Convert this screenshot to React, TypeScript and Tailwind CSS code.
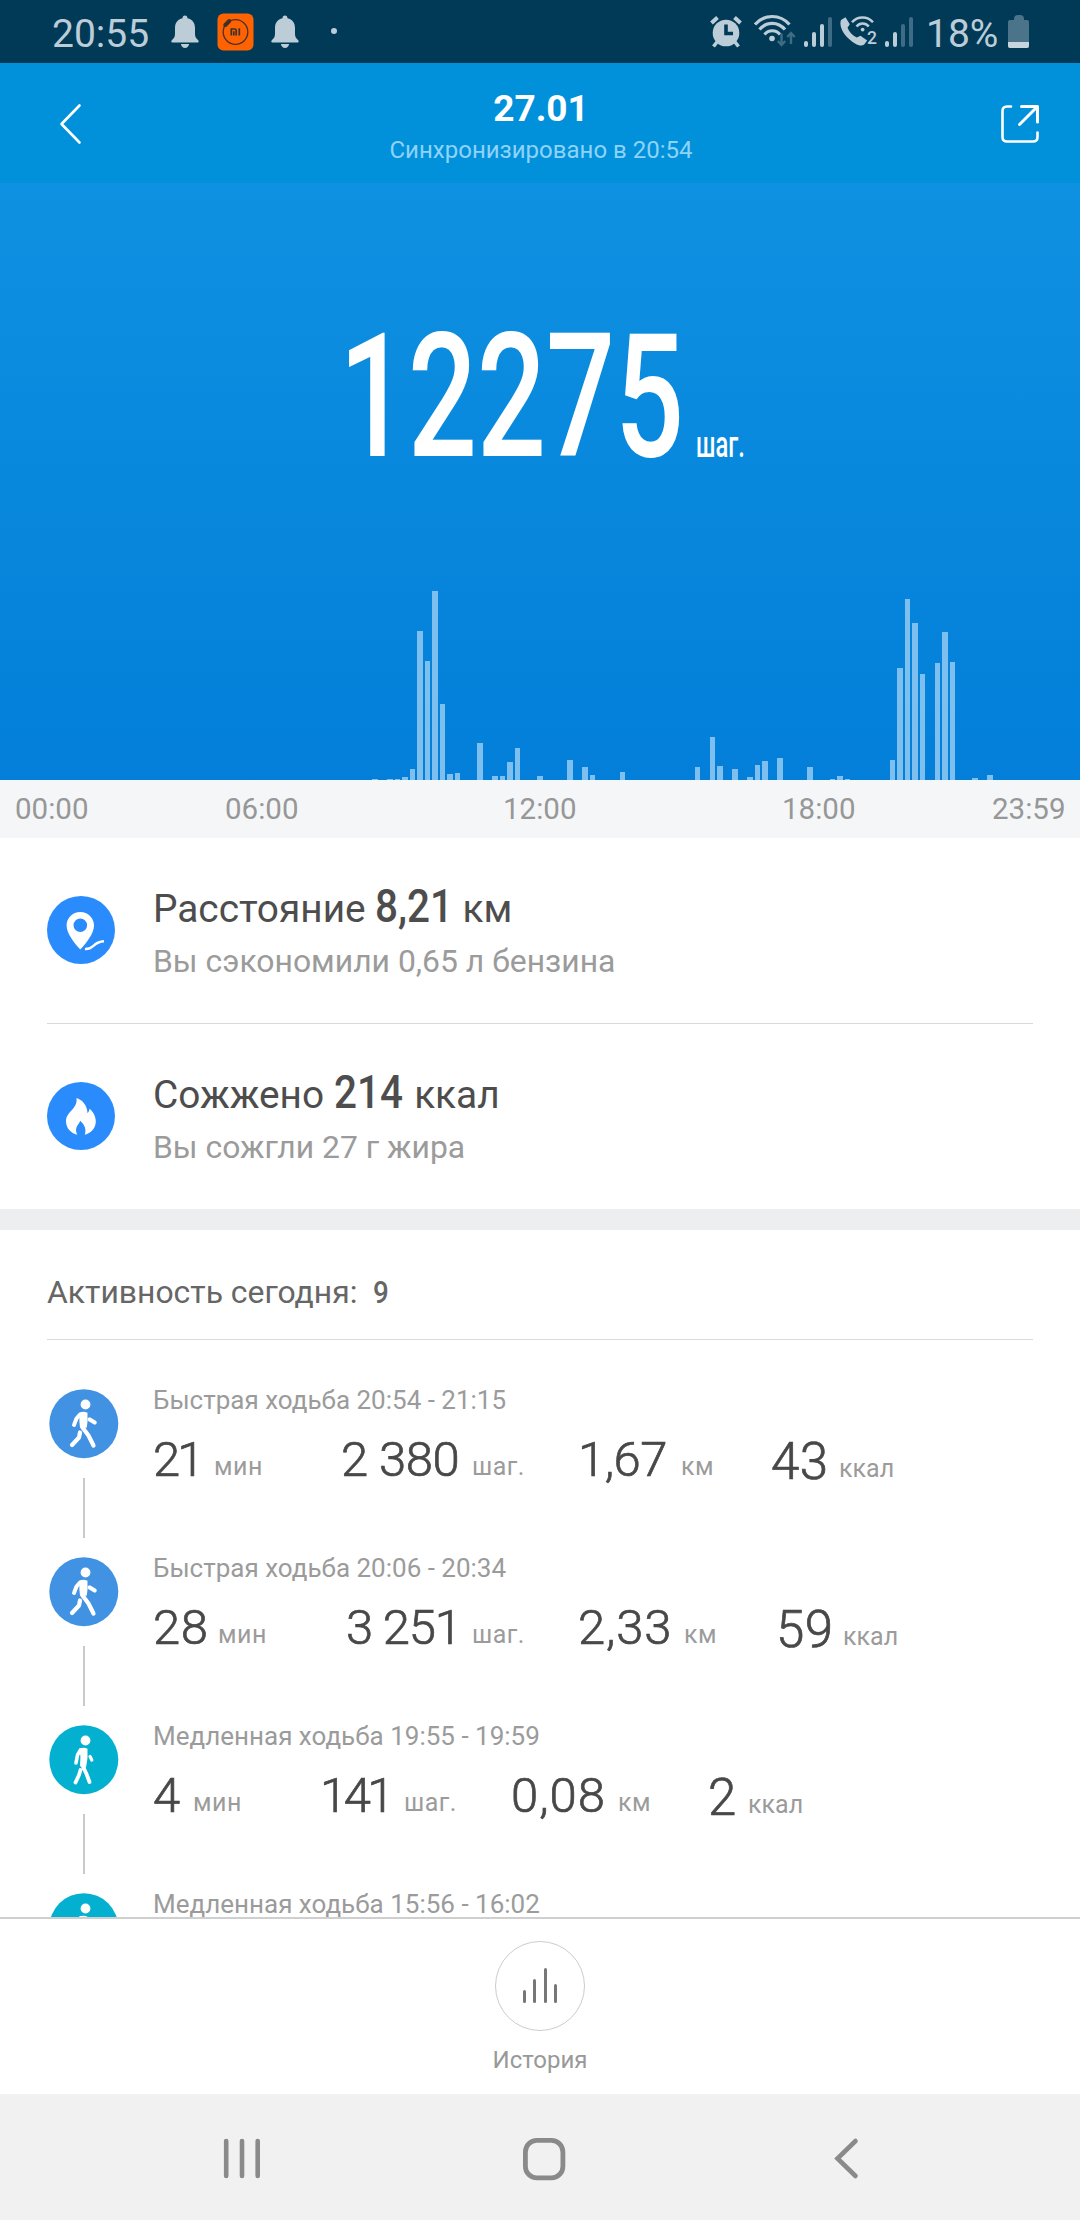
import React from "react";

const BAR_HEIGHTS: Record<number, number> = {
  49: 1, 51: 1, 52: 1.5, 53: 3, 54: 11, 55: 149, 56: 119.5, 57: 189, 58: 76, 59: 6, 60: 7,
  63: 37, 65: 4, 66: 4, 67: 18, 68: 32, 71: 4, 75: 20, 77: 13, 78: 5, 82: 8, 92: 13, 94: 43,
  95: 14, 97: 11, 99: 3, 100: 15, 101: 19, 103: 22, 107: 13, 110: 1, 111: 4, 112: 1,
  118: 20, 119: 112, 120: 181, 121: 157, 122: 106, 124: 117, 125: 148, 126: 118, 129: 2, 131: 5,
};

function Bell() {
  return (
    <svg width="28" height="33" viewBox="0 0 28 33" fill="#bccdd8">
      <path d="M14 .5c1.700 0 2.500 1.200 2.500 2.700C21.500 4.400 24 8 24 13v6c0 3 1.200 4.300 3 6 1.200 1.200.8 2.500-.8 2.500H1.800C.2 27.500-.2 26.200 1 25c1.800-1.700 3-3 3-6v-6C4 8 6.500 4.400 11.500 3.200 11.500 1.700 12.300.5 14 .5z" />
      <path d="M10 29h8c0 2.300-1.800 4-4 4s-4-1.700-4-4z" />
    </svg>
  );
}

function MiBadge() {
  return (
    <svg width="37" height="38" viewBox="0 0 37 38" fill="none">
      <rect x=".5" y=".5" width="36" height="37" rx="6" fill="#ff6200" />
      <circle cx="18.500" cy="19" r="12.300" stroke="#4a3128" strokeWidth="1.300" />
      <path d="M7 13l5-5.500" stroke="#ff6200" strokeWidth="7" />
      <path d="M8.300 12l4-4" stroke="#3f3029" strokeWidth="4" strokeLinecap="round" />
      <path d="M14.300 22.500V16h3.200c1.200 0 1.700.6 1.700 1.700v4.800M16.800 18.200v4.300M22.300 15.200v7.300" stroke="#3f3029" strokeWidth="1.700" />
    </svg>
  );
}

function Signal({ on }: { on: number }) {
  const bars = [6, 15, 23, 30];
  return (
    <span className="flex h-[30px] w-[28px] items-end justify-between">
      {bars.map((h, i) => (
        <span
          key={h}
          className={i < on ? "w-[3.500px] rounded-full bg-[#bccdd8]" : "w-[3.500px] rounded-full bg-[#3f6c85]"}
          style={{ height: h }}
        />
      ))}
    </span>
  );
}

function StatusBar() {
  return (
    <div className="flex h-[63px] items-start bg-[#003a57] text-[#bccdd8]">
      <span className="ml-[52px] mt-[11px] w-[119px] text-[39px] leading-[46px]">20:55</span>
      <span className="mt-[15px] w-[46px]"><Bell /></span>
      <span className="mt-[13px] w-[54px]"><MiBadge /></span>
      <span className="mt-[15px] w-[60px]"><Bell /></span>
      <span className="mt-[28px] h-[6px] w-[6px] rounded-full bg-[#bccdd8]" />
      <svg className="ml-[373px] mt-[16px]" width="32" height="32" viewBox="0 0 32 32" fill="none" stroke="#bccdd8">
        <circle cx="16" cy="17" r="13.300" fill="#bccdd8" stroke="none" />
        <path d="M1.500 7l6-5.500M30.500 7l-6-5.500" strokeWidth="4" />
        <path d="M7 26l-3.500 4.500M25 26l3.500 4.500" strokeWidth="3.600" />
        <path d="M16 8.500v9h7" stroke="#003a57" strokeWidth="3.600" />
      </svg>
      <svg className="ml-[11px] mt-[13px]" width="44" height="35" viewBox="0 0 44 35" fill="none" stroke="#bccdd8" strokeWidth="3.200">
        <path d="M2 11.500C11.500.8 27 .8 36.500 11.500" />
        <path d="M6.500 16.500c7-8.300 18.500-8.300 25.500 0" />
        <path d="M11.500 21.500c4-5 11.500-5 15.500 0" />
        <circle cx="19" cy="25.500" r="2.800" fill="#bccdd8" stroke="none" />
        <g stroke="#3f6c85" strokeWidth="2.400">
          <path d="M28.500 20.500v11M24.800 28l3.700 4 3.700-4" />
          <path d="M38 31V20.500M34.300 24l3.700-4 3.700 4" />
        </g>
      </svg>
      <span className="ml-[7px] mt-[17px]"><Signal on={3} /></span>
      <svg className="ml-[7px] mt-[15px]" width="38" height="33" viewBox="0 0 38 33" fill="none">
        <path d="M2 5L6.500 2.200l4.300 7-2.300 3.600c1.700 4.200 5 7.700 9.300 9.700l3.700-1.700 6.700 4.600-3 4c-2 1.600-5.200 1.300-9.200-1C7.500 23.500-1 13 2 5z" fill="#bccdd8" />
        <path d="M13 7.300c5.500-6.300 15.500-6.300 21 0M17.500 11.500c3.300-4 9-4 12.300 0" stroke="#bccdd8" strokeWidth="2.500" />
        <circle cx="23.600" cy="14.600" r="1.900" fill="#bccdd8" />
        <text x="28" y="29.300" fill="#bccdd8" fontFamily="Roboto" fontWeight="500" fontSize="17.500">2</text>
      </svg>
      <span className="ml-[8px] mt-[17px]"><Signal on={2} /></span>
      <span className="ml-[13px] mt-[11px] w-[82px] whitespace-nowrap text-[39px] leading-[46px]">18%</span>
      <span className="mt-[15px] flex w-[21px] flex-col items-center">
        <span className="h-[5px] w-[10px] rounded-t-sm bg-[#4b7389]" />
        <span className="flex h-[28px] w-full items-end overflow-hidden rounded-[2px] bg-[#4b7389]">
          <span className="h-[6px] w-full bg-[#c6d5de]" />
        </span>
      </span>
    </div>
  );
}

function Header() {
  return (
    <header className="flex h-[120px] items-start justify-between bg-[#0091da] pl-[58px] pr-[40px]">
      <svg className="mt-[40px]" width="24" height="42" viewBox="0 0 24 42" fill="none" stroke="#fff" strokeWidth="2.600" strokeLinecap="round" strokeLinejoin="round">
        <path d="M21.500 2.500L3.500 21l18 18.500" />
      </svg>
      <div className="mt-[24px] flex w-[400px] flex-col items-center">
        <h1 className="text-[37px] font-bold leading-[44px] text-white">27.01</h1>
        <p className="mt-[3px] whitespace-nowrap text-[24px] leading-[32px] text-[#8fd3f8]">Синхронизировано в 20:54</p>
      </div>
      <svg className="mt-[41px]" width="40" height="40" viewBox="0 0 40 40" fill="none" stroke="#fff" strokeWidth="3" strokeLinecap="round" strokeLinejoin="round">
        <path d="M11 2.500H7C4 2.500 2.500 4 2.500 7v26c0 3 1.500 4.500 4.500 4.500h26c3 0 4.500-1.500 4.500-4.500v-4.500" strokeWidth="2.600" />
        <path d="M21.500 2.500h16V18M36.500 3.500L19.500 20.500" />
      </svg>
    </header>
  );
}

function StepsPanel() {
  return (
    <section className="flex h-[597px] flex-col justify-between bg-linear-to-b from-[#0f91e1] to-[#037fd9]">
      <div className="flex h-[300px] items-start pl-[339px] pt-[124px] text-white">
        <span className="w-[357px] origin-left scale-x-[0.702] whitespace-nowrap text-[173px] font-medium leading-[180px]">12275</span>
        <span className="mt-[117px] origin-left scale-x-[0.660] text-[36px] font-medium leading-[42px]">шаг.</span>
      </div>
      <div className="flex h-[200px] items-end pl-[4.500px]">
        {Array.from({ length: 143 }, (_, k) => (
          <span key={k} className="w-[7.500px] shrink-0">
            <span className="block w-[5.500px] bg-[#7dc0f0]" style={{ height: BAR_HEIGHTS[k] ?? 0 }} />
          </span>
        ))}
      </div>
    </section>
  );
}

function Axis() {
  return (
    <div className="flex h-[58px] bg-[#f5f6f8] pl-[15px] text-[29.500px] leading-[59px] text-[#979797]">
      <span className="w-[210px]">00:00</span>
      <span className="w-[278px]">06:00</span>
      <span className="w-[279px]">12:00</span>
      <span className="w-[210px]">18:00</span>
      <span>23:59</span>
    </div>
  );
}

type StatProps = { icon: React.ReactNode; label: string; value: string; valueClass: string; unit: string; note: string };

function Stat({ icon, label, value, valueClass, unit, note }: StatProps) {
  return (
    <div className="flex h-[185px] pl-[47px]">
      <span className="mt-[58px] w-[106px]">{icon}</span>
      <div className="pt-[44px]">
        <div className="flex h-[48px] items-baseline whitespace-nowrap text-[38.800px] leading-[48px] text-[#4d4d4d]">
          <span>{label}</span>
          <span className={valueClass}>{value}</span>
          <span>{unit}</span>
        </div>
        <p className="mt-[11px] whitespace-nowrap text-[31.900px] leading-[40px] text-[#9b9b9b]">{note}</p>
      </div>
    </div>
  );
}

function PinIcon() {
  return (
    <svg width="68" height="68" viewBox="0 0 68 68">
      <circle cx="34" cy="34" r="34" fill="#2a8cfc" />
      <path fillRule="evenodd" fill="#fff" d="M33.300 16c7.700 0 13.700 6 13.700 13.500 0 8-7.700 17.500-13.700 24-6-6.500-13.700-16-13.700-24C19.600 22 25.600 16 33.300 16zm0 6.500a6.800 6.800 0 100 13.600 6.800 6.800 0 000-13.600z" />
      <path d="M38 53c9 .8 7.500-7.200 19-7.700" fill="none" stroke="#fff" strokeWidth="2.400" />
    </svg>
  );
}

function FlameIcon() {
  return (
    <svg width="68" height="68" viewBox="0 0 68 68">
      <circle cx="34" cy="34" r="34" fill="#2a8cfc" />
      <path fill="#fff" d="M29.500 16c6.500 2 10.800 8 11 15 1.200-1 1.800-2.300 2-4.200 4 3.500 6.500 8 6.300 13.200-.3 6.500-5 11.200-11 12.700 1.700-5 .2-9.700-4.600-14-1 3.300-3.700 4.800-4.100 8.300-.2 2.200.3 4 1.200 5.700-6.500-1.500-11.300-6.700-11.300-13.200C19 29.500 31 27 29.500 16z" />
    </svg>
  );
}

function Walker({ slow }: { slow?: boolean }) {
  return (
    <svg width="70" height="70" viewBox="0 0 70 70" fill="none" stroke="#fff" strokeWidth="4.200" strokeLinecap="round" strokeLinejoin="round">
      <circle cx="34.800" cy="34.700" r="34.500" fill={slow ? "#04b0cf" : "#4192e2"} stroke="none" />
      <circle cx="36.500" cy="15.500" r="4.900" fill="#fff" stroke="none" />
      {slow ? (
        <>
          <path d="M31.500 25l-3 5-1.500 8" strokeWidth="3.600" />
          <path d="M30.500 23.700q4-2 8 0 .8 9-1.500 19l-6-1.500q1.200-9-.5-17.500z" fill="#fff" stroke="none" />
          <path d="M41 31.500l1.800 3.500" strokeWidth="3.200" />
          <path d="M34 41.500l3.500 7.500 3 8M31.500 45l-1.500 5-3.500 7.500" strokeWidth="3.800" />
        </>
      ) : (
        <>
          <path d="M31 25.500l-3.500 4-2.500 6.500" strokeWidth="4" />
          <path d="M30.500 23.700q3.500-1.700 8 0 .5 8-.8 15l-6.700 0q-1-7-.5-15z" fill="#fff" stroke="none" />
          <path d="M40.700 30.500l5 3" />
          <path d="M33.500 38.500l6 8 5 10M31 43.500l-1 5-7 7.500" />
        </>
      )}
    </svg>
  );
}

type Metric = { value: string; unit: string; valueClass: string; unitClass: string };
type Activity = { title: string; slow?: boolean; metrics: Metric[] };

const ACTIVITIES: Activity[] = [
  {
    title: "Быстрая ходьба 20:54 - 21:15",
    metrics: [
      { value: "21", unit: "мин", valueClass: "w-[61px] tracking-[-3px]", unitClass: "w-[127px]" },
      { value: "2 380", unit: "шаг.", valueClass: "w-[131px] tracking-[-0.500px]", unitClass: "w-[106px]" },
      { value: "1,67", unit: "км", valueClass: "w-[103px] tracking-[-0.500px]", unitClass: "w-[90px]" },
      { value: "43", unit: "ккал", valueClass: "w-[68px] pt-[2px] text-[51px]", unitClass: "w-[60px] pt-[2px] tracking-[0px]" },
    ],
  },
  {
    title: "Быстрая ходьба 20:06 - 20:34",
    metrics: [
      { value: "28", unit: "мин", valueClass: "w-[65px]", unitClass: "w-[128px]" },
      { value: "3 251", unit: "шаг.", valueClass: "w-[126px] tracking-[-1.200px]", unitClass: "w-[106px]" },
      { value: "2,33", unit: "км", valueClass: "w-[106px] tracking-[0.800px]", unitClass: "w-[92px]" },
      { value: "59", unit: "ккал", valueClass: "w-[67px] pt-[2px] text-[51px]", unitClass: "w-[60px] pt-[2px] tracking-[0px]" },
    ],
  },
  {
    title: "Медленная ходьба 19:55 - 19:59",
    slow: true,
    metrics: [
      { value: "4", unit: "мин", valueClass: "w-[40px]", unitClass: "w-[127px]" },
      { value: "141", unit: "шаг.", valueClass: "w-[84px] tracking-[-3.500px]", unitClass: "w-[107px]" },
      { value: "0,08", unit: "км", valueClass: "w-[107px] tracking-[1px]", unitClass: "w-[90px]" },
      { value: "2", unit: "ккал", valueClass: "w-[40px] pt-[2px] text-[51px]", unitClass: "w-[60px] pt-[2px] tracking-[0px]" },
    ],
  },
  { title: "Медленная ходьба 15:56 - 16:02", slow: true, metrics: [] },
];

function ActivityRow({ a }: { a: Activity }) {
  return (
    <div className="flex h-[168px] shrink-0 pl-[49px]">
      <div className="flex w-[104px] shrink-0 flex-col pt-[5px]">
        <Walker slow={a.slow} />
        <span className="ml-[34px] mt-[19px] h-[60px] w-[2px] bg-[#c9c9c9]" />
      </div>
      <div>
        <p className="whitespace-nowrap text-[26px] leading-[32px] text-[#9b9b9b]">{a.title}</p>
        <div className="mt-[14px] flex whitespace-nowrap text-[49px] font-light leading-[60px] tracking-[0.500px] text-[#484848]">
          {a.metrics.map((m) => (
            <div key={m.unit} className="flex [-webkit-text-stroke:0.700px_#484848]">
              <span className={m.valueClass}>{m.value}</span>
              <span className={m.unitClass}>
                <span className="mt-[7px] block text-[25px] font-normal leading-[60px] text-[#9b9b9b] [-webkit-text-stroke:0px]">{m.unit}</span>
              </span>
            </div>
          ))}
        </div>
      </div>
    </div>
  );
}

function HistoryBar() {
  return (
    <div className="flex h-[177px] flex-col items-center border-t-2 border-[#cfcfcf] bg-white pt-[22px]">
      <span className="flex h-[90px] w-[90px] items-end justify-center gap-[7.500px] rounded-full border-[1.500px] border-[#cccccc] pb-[27px]">
        <span className="h-[13px] w-[3px] rounded-full bg-[#777]" />
        <span className="h-[24px] w-[3px] rounded-full bg-[#777]" />
        <span className="h-[35px] w-[3px] rounded-full bg-[#777]" />
        <span className="h-[19px] w-[3px] rounded-full bg-[#777]" />
      </span>
      <span className="mt-[13px] text-[24px] leading-[32px] text-[#999]">История</span>
    </div>
  );
}

function NavBar() {
  return (
    <nav className="flex h-[126px] items-start bg-[#f1f1f1] pt-[42px]">
      <svg className="ml-[220px]" width="44" height="46" viewBox="0 0 44 46" stroke="#8a8a8a" strokeWidth="4.600" strokeLinecap="round">
        <path d="M6.200 5v35M22 5v35M37.700 5v35" />
      </svg>
      <svg className="ml-[257px]" width="46" height="46" viewBox="0 0 46 46" fill="none" stroke="#8a8a8a" strokeWidth="4.800">
        <rect x="4.400" y="4.400" width="37.500" height="37.500" rx="11.500" />
      </svg>
      <svg className="ml-[264px]" width="32" height="46" viewBox="0 0 32 46" fill="none" stroke="#8a8a8a" strokeWidth="4.600" strokeLinecap="round">
        <path d="M24.500 5L6.500 22.500l18 17.500" />
      </svg>
    </nav>
  );
}

export default function App() {
  return (
    <div className="flex h-[2220px] w-[1080px] flex-col overflow-hidden bg-white font-[Roboto,sans-serif]">
      <StatusBar />
      <Header />
      <StepsPanel />
      <Axis />
      <Stat
        icon={<PinIcon />}
        label="Расстояние"
        value="8,21"
        valueClass="ml-[9px] w-[88px] origin-left scale-x-[0.860] text-[47px] font-medium"
        unit="км"
        note="Вы сэкономили 0,65 л бензина"
      />
      <div className="mx-[47px] h-[1px] bg-[#d9d9d9]" />
      <Stat
        icon={<FlameIcon />}
        label="Сожжено"
        value="214"
        valueClass="ml-[10px] w-[80px] origin-left scale-x-[0.860] text-[47px] font-medium"
        unit="ккал"
        note="Вы сожгли 27 г жира"
      />
      <div className="h-[21px] bg-[#eceeef]" />
      <h2 className="mx-[47px] flex h-[110px] items-baseline whitespace-nowrap border-b border-[#d9d9d9] pt-[42px] text-[31.900px] leading-[40px] text-[#666]">
        Активность сегодня:
        <span className="ml-[16px] origin-left scale-x-[0.870] font-medium">9</span>
      </h2>
      <div className="flex min-h-0 flex-1 flex-col overflow-hidden pt-[44px]">
        {ACTIVITIES.map((a) => (
          <ActivityRow key={a.title} a={a} />
        ))}
      </div>
      <HistoryBar />
      <NavBar />
    </div>
  );
}
